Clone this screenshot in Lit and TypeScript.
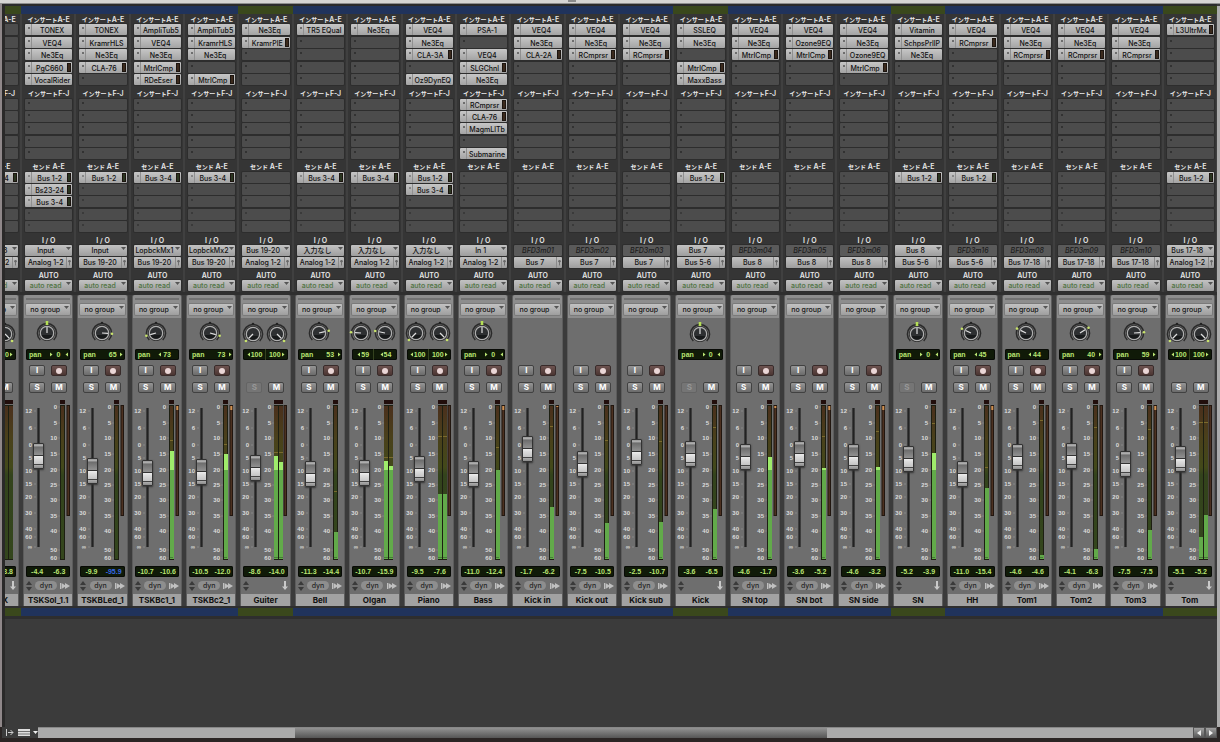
import { LitElement, html, svg, css, nothing } from "lit";
import { classMap } from "lit/directives/class-map.js";

interface Slot { name: string; meter?: boolean; }
interface Track {
  name: string;
  bus?: boolean;
  inserts: string[];
  insertsB?: string[];
  sends?: string[];
  input: string;
  offline?: boolean;
  output: string;
  pans: number[];
  record: boolean;
  solo: boolean;
  dyn: boolean;
  fader: number;
  levels: number[];
  peak?: number;
  reduction: number;
  volume: string;
  peakText: string;
  silent?: boolean;
}

/* A trailing "|" on a slot name marks a plug-in or send with a small meter. */
const parse = (list: string[] | undefined): Slot[] =>
  [0, 1, 2, 3, 4].map((i) => {
    const raw = list?.[i] ?? "";
    return { name: raw.replace("|", ""), meter: raw.endsWith("|") };
  });

/* fader, levels and peak are distances from the top of the fader area; reduction -1 means no reduction meter */
const t = (
  name: string, inserts: string[], sends: string[], input: string, output: string, pans: number[],
  fader: number, levels: number[], peak: number, reduction: number, volume: string, peakText: string,
  extra: Partial<Track> = {},
): Track => ({
  name, inserts, sends, input, output, pans, fader, levels, peak, reduction, volume, peakText,
  record: true, solo: true, dyn: true, ...extra,
});

const busTrack: Partial<Track> = { bus: true, record: false, solo: false, dyn: false };
const off: Partial<Track> = { offline: true };

const edgeTrack = t("TONEX", [], ["Bus 3-4|"], "Bus 17-18", "Analog 1-2", [-100, 100], 75, [165, 165], 0, -1, "-8.0", "-13.8",
  { ...busTrack, solo: true });

const tracks: Track[] = [
  t("TSKSol_1.1", ["TONEX", "VEQ4", "Ne3Eq", "PgC660|", "VocalRider"], ["Bus 1-2|", "Bs23-24|", "Bus 3-4|"], "Input", "Analog 1-2", [0], 61, [165], 0, 0, "-4.4", "-6.3"),
  t("TSKBLed_1", ["TONEX", "KramrHLS", "Ne3Eq", "CLA-76|"], ["Bus 1-2|"], "Input", "Bus 19-20", [65], 76, [165], 0, 0, "-9.9", "-95.9", { silent: true }),
  t("TSKBc1_1", ["AmpliTub5", "VEQ4", "Ne3Eq", "MtrlCmp|", "RDeEser|"], ["Bus 3-4|"], "LopbckMx1", "Bus 19-20", [-73], 78, [56], 45, 4, "-10.7", "-10.6"),
  t("TSKBc2_1", ["AmpliTub5", "KramrHLS", "Ne3Eq", "", "MtrlCmp|"], ["Bus 3-4|"], "LopbckMx2", "Bus 19-20", [73], 77, [59], 49, 4, "-10.5", "-12.0"),
  t("Guiter", ["Ne3Eq", "KramrPlE|"], [], "Bus 19-20", "Analog 1-2", [-100, 100], 73, [61, 67], 57, 0, "-8.6", "-14.0", busTrack),
  t("Bell", ["TR5 EQual"], ["Bus 3-4|"], "入力なし", "Analog 1-2", [53], 79, [137], 96, -1, "-11.3", "-14.4"),
  t("Olgan", ["Ne3Eq"], ["Bus 3-4|"], "入力なし", "Analog 1-2", [-59, -54], 78, [66, 71], 62, -1, "-10.7", "-15.9"),
  t("Piano", ["VEQ4", "Ne3Eq", "CLA-3A|", "", "Oz9DynEQ"], ["Bus 1-2|", "Bus 3-4|"], "入力なし", "Analog 1-2", [-100, 100], 74, [99, 99], 41, 0, "-9.5", "-7.6"),
  t("Bass", ["PSA-1", "", "VEQ4", "SLGChnl|", "Ne3Eq"], [], "In 1", "Analog 1-2", [0], 79, [75], 52, 4, "-11.0", "-12.4", { insertsB: ["RCmprsr|", "CLA-76|", "MagmLlTb", "", "Submarine"] }),
  t("Kick in", ["VEQ4", "Ne3Eq", "CLA-2A|"], [], "BFD3m01", "Bus 7", [], 54, [112], 31, 1, "-1.7", "-6.2", off),
  t("Kick out", ["VEQ4", "Ne3Eq", "RCmprsr|"], [], "BFD3m02", "Bus 7", [], 69, [128], 45, 0, "-7.5", "-10.5", off),
  t("Kick sub", ["VEQ4", "Ne3Eq", "RCmprsr|"], [], "BFD3m03", "Bus 7", [], 57, [127], 46, 0, "-2.5", "-10.7", off),
  t("Kick", ["SSLEQ", "Ne3Eq", "", "MtrlCmp|", "MaxxBass"], ["Bus 1-2|"], "Bus 7", "Bus 5-6", [0], 59, [114], 32, 0, "-3.6", "-6.5", busTrack),
  t("SN top", ["VEQ4", "Ne3Eq", "MtrlCmp|"], [], "BFD3m04", "Bus 8", [], 62, [62], 0, 2, "-4.6", "-1.7", off),
  t("SN bot", ["VEQ4", "Ozone9EQ", "MtrlCmp|"], [], "BFD3m05", "Bus 8", [], 59, [73], 41, 4, "-3.6", "-5.2", off),
  t("SN side", ["VEQ4", "Ne3Eq", "Ozone9EQ", "MtrlCmp|"], [], "BFD3m06", "Bus 8", [], 62, [72], 36, 4, "-4.6", "-3.2", off),
  t("SN", ["Vitamin", "SchpsPrllP", "Ne3Eq"], ["Bus 1-2|"], "Bus 8", "Bus 5-6", [0], 64, [58], 28, -1, "-5.2", "-3.9", busTrack),
  t("HH", ["VEQ4", "RCmprsr|"], ["Bus 1-2|"], "BFD3m16", "Bus 5-6", [-45], 79, [93], 72, 4, "-11.0", "-15.4", off),
  t("Tom1", ["VEQ4", "Ne3Eq", "RCmprsr|"], [], "BFD3m08", "Bus 17-18", [-44], 62, [160], 25, 0, "-4.6", "-4.6", off),
  t("Tom2", ["VEQ4", "Ne3Eq", "RCmprsr|"], [], "BFD3m09", "Bus 17-18", [40], 61, [154], 32, 0, "-4.1", "-6.3", off),
  t("Tom3", ["VEQ4", "Ne3Eq", "RCmprsr|"], [], "BFD3m10", "Bus 17-18", [59], 69, [135], 34, 4, "-7.5", "-7.5", off),
  t("Tom", ["L3UltrMx|"], ["Bus 1-2|"], "Bus 17-18", "Analog 1-2", [-100, 100], 64, [142, 120], 27, 0, "-5.1", "-5.2", { ...busTrack, solo: true }),
];

const faderScale: [string, number][] = [
  ["12", 16], ["6", 33], ["0", 50], ["5", 63], ["10", 76], ["15", 89], ["20", 102], ["30", 118], ["40", 134], ["60", 142], ["∞", 152],
];
const meterScale: [string, number][] = [
  ["0", 12], ["5", 28], ["10", 43], ["15", 59], ["20", 75], ["25", 90], ["30", 105], ["35", 121], ["40", 136], ["50", 155], ["60", 163],
];

class ChannelStrip extends LitElement {
  static properties = { track: { attribute: false } };
  declare track: Track;

  static styles = css`
    :host { display: block; min-width: 0; font-family: Inter, "Noto Sans CJK JP", sans-serif; font-size: 7px; color: #111; }
    * { box-sizing: border-box; }
    button, select, input { font: inherit; margin: 0; padding: 0; border: 0; border-radius: 0; color: inherit; }
    .band { height: 8px; background: #20335c; }
    .band.bus { background: #3a481c; }
    .upper { height: 278px; background: #353535; border-left: 1px solid #404040; border-right: 1px solid #404040; padding: 0 2px 0 3px; }
    .racks { display: grid; grid-template-rows: repeat(3, 1fr); height: 219px; }
    .rack { display: grid; grid-template-rows: 10px repeat(5, 1fr); }
    .rack + .rack { grid-template-rows: 12px repeat(5, 1fr); }
    .title { text-align: center; white-space: pre; color: #e8e8e8; font-weight: 600; line-height: 12px; height: 12px; }
    .rack + .rack .title { line-height: 14px; }
    .kana { font-size: 6px; font-weight: 700; }
    .slot { display: flex; align-items: stretch; width: 100%; height: 11px; background: linear-gradient(#c6c6c6, #a4a4a4); border-radius: 1px; box-shadow: 0 0 0 1px #2d2d2d; font-weight: 500; line-height: 13px; }
    .slot.empty { background: #4c4c4c; }
    .dot { flex: none; width: 7px; border-right: 1px solid #909090; padding: 3px 0 0 3px; }
    .dot::before { content: ""; display: block; width: 2px; height: 2px; border-radius: 1px; background: #555; }
    .empty .dot { border-color: transparent; }
    .empty .dot::before { background: #2a2a2a; }
    .send .dot::before { background: #777; }
    .send .empty .dot::before { background: #343434; }
    .label { flex: 1; text-align: center; white-space: nowrap; min-width: 0; display: flex; justify-content: center; }
    .mini { flex: none; width: 4px; height: 9px; margin: 1px 1px 0 0; border: 1px solid #1c1510; background: #3b2a1d; }
    .send .mini { background: #2a3520; }
    .routing { display: grid; gap: 1px; grid-template-rows: 11px 11px 11px 10px 11px; }
    .routing .title { height: 11px; line-height: 15px; }
    .routing .auto { height: 10px; line-height: 14px; }
    .drop { display: flex; height: 11px; border-radius: 1px; background: linear-gradient(#c2c2c2, #9e9e9e); box-shadow: 0 0 0 1px #2d2d2d; font-weight: 500; }
    .drop select { appearance: none; flex: 1; min-width: 0; width: 0; height: 11px; line-height: 11px; background: none; text-align: center; text-align-last: center; text-overflow: clip; }
    .drop svg { flex: none; display: block; width: 6px; height: 11px; }
    .drop.pin svg { border-left: 1px solid #8a8a8a; }
    .drop.green select { color: #4f7442; }
    .drop.offline { background: #5a5a5a; font-style: italic; }
    .drop.offline select { color: #1c1c1c; opacity: 1; }
    .gap { height: 3px; background: #2f2f2f; }
    .body { margin: 0 2px; background: #6e6e6e; border-radius: 2px 2px 0 0; height: 311px; display: flex; flex-direction: column; border-left: 1px solid #5c5c5c; border-right: 1px solid #5c5c5c; }
    .group { height: 23px; background: #8d8d8d; padding: 3px 2px 0; border-radius: 2px 2px 0 0; }
    .group::before { content: ""; display: block; height: 2px; margin-bottom: 4px; background: #727272; }
    .group .drop { box-shadow: 0 0 0 1px #7a7a7a; }
    .knobs { display: flex; justify-content: center; height: 32px; align-items: center; padding-right: 2px; }
    .knob { position: relative; flex: none; width: 24px; height: 24px; }
    .knob svg { display: block; width: 24px; height: 24px; }
    .knob input { position: absolute; inset: 0; width: 24px; height: 24px; opacity: 0; }
    .lcd { height: 11px; margin: 0 2px; display: flex; align-items: center; border-radius: 2px; background: #101a08; box-shadow: inset 0 0 0 1px #080a06; color: #b9e472; font-family: "Liberation Sans", sans-serif; font-weight: 700; font-size: 7px; line-height: 11px; }
    .lcd.blank { visibility: hidden; }
    .pan-name { flex: 1; padding-left: 3px; }
    .mark { width: 4px; height: 11px; flex: none; display: block; }
    .value { min-width: 10px; text-align: center; }
    .pan-end { width: 7px; display: flex; justify-content: center; }
    .half { flex: 1; display: flex; justify-content: center; align-items: center; }
    .half + .half { box-shadow: -1px 0 0 #34421f; }
    .pair { display: flex; gap: 6px; padding-left: 5px; height: 11px; }
    .first { margin: 5px 0 6px; }
    .key { width: 16px; height: 11px; border-radius: 2px; border: 1px solid #414141; background: linear-gradient(#959595, #6b6b6b); color: #fff; font-weight: 700; font-size: 8px; line-height: 9px; text-align: center; flex: none; }
    .key.rec { background: linear-gradient(#6d5350, #4b3532); border-color: #382b2a; display: flex; align-items: center; justify-content: center; }
    .key.rec::before { content: ""; width: 6px; height: 6px; border-radius: 3px; background: #ead6d6; }
    .key:disabled { background: #757575; color: #989898; border-color: #646464; }
    .faders { display: flex; height: 165px; margin-top: 2px; }
    .scale { flex: none; width: 9px; height: 165px; overflow: visible; }
    .scale text, .meters text { font-family: "Liberation Sans", sans-serif; font-size: 6px; font-weight: 700; fill: #dcdcdc; text-anchor: end; }
    .fader { appearance: none; flex: none; writing-mode: vertical-lr; direction: rtl; width: 11px; height: 165px; position: relative; background: linear-gradient(90deg, #4a4a4a, #222, #4a4a4a) center / 3px 139px no-repeat; }
    .fader::-webkit-slider-runnable-track { width: 11px; height: 165px; background: none; }
    .fader::-webkit-slider-thumb { appearance: none; width: 11px; height: 26px; border-radius: 1px; border: 1px solid #333; background: linear-gradient(#9a9a9a 0, #b2b2b2 8%, #6c6c6c 12%, #8f8f8f 44%, #333 45%, #333 49%, #eee 50%, #ddd 60%, #c4c4c4 84%, #444 85%, #444 88%, #ababab 89%, #8b8b8b 100%); box-shadow: 0 1px 2px #333; }
    .meters { flex: none; width: 29px; height: 165px; overflow: visible; }
    .levels { margin-top: 6px; justify-content: space-around; }
    .levels span { width: 20px; text-align: center; }
    .levels .silent { color: #3568e6; }
    .tools { display: flex; align-items: center; justify-content: space-between; height: 11px; margin-top: 3px; padding: 0 2px; }
    .tools svg { display: block; flex: none; }
    .dyn { width: 22px; height: 9px; border-radius: 5px; background: #8e8e8e; color: #262626; line-height: 9px; font-weight: 500; }
    .name { height: 12px; margin-top: 3px; background: #a2a2a2; font-size: 8px; font-weight: 700; line-height: 12px; display: flex; justify-content: center; white-space: nowrap; }
    .foot { border-top: 2px solid #2f2f2f; height: 10px; }
  `;

  private rack(prefix: string, range: string, list: string[] | undefined, send = false) {
    return html`<section class=${classMap({ rack: true, send })}>
      <div class="title"><span class="kana">${prefix}</span>${send ? " " : ""}${range}</div>
      ${parse(list).map((s, i) => html`<button class=${classMap({ slot: true, empty: !s.name })} aria-label=${s.name || `${prefix} ${i + 1}`}>
        <span class="dot"></span><span class="label">${s.name}</span>${s.meter ? html`<span class="mini"></span>` : nothing}
      </button>`)}
    </section>`;
  }

  private drop(label: string, value: string, kind = "") {
    return html`<div class="drop ${kind}">
      <select aria-label=${label} ?disabled=${kind === "offline"}><option>${value}</option></select>
      ${kind === "pin"
        ? html`<svg viewBox="0 0 6 11"><circle cx="3" cy="4" r="1.5" fill="#777"></circle><path d="M3 2.5V9M1.5 4H4.5" stroke="#666" fill="none"></path></svg>`
        : kind === "offline" ? nothing
        : html`<svg viewBox="0 0 6 11"><path d="M0 2H5L2.5 5Z" fill="#555"></path></svg>`}
    </div>`;
  }

  private knob(pan: number) {
    const a = (Math.sign(pan) * Math.min(135, Math.abs(pan) * 1.45) * Math.PI) / 180;
    const x = (r: number) => 12 + r * Math.sin(a);
    const y = (r: number) => 12 - r * Math.cos(a);
    return html`<label class="knob">
      <svg viewBox="0 0 24 24">
        <path d="M5.3 19A9.6 9.6 0 1 1 18.7 19" fill="none" stroke="#2a2a2a" stroke-width="1.5"></path>
        <circle cx="12" cy="2" r="1.3" fill="#222"></circle>
        <circle cx="12" cy="12" r="8" fill="#252525"></circle>
        <circle cx="12" cy="12" r="6.7" fill="#2e3032" stroke="#b0b0b0" stroke-width="1.2"></circle>
        <path d="M6.5 14A6 6 0 0 0 17.5 14Z" fill="#17191a"></path>
        <path d="M${x(0)} ${y(0)}L${x(6)} ${y(6)}" stroke="#e0e0e0" stroke-width="1.2"></path>
        ${pan === 0
          ? svg`<rect x="10.7" y="0" width="2.6" height="4" fill="#b5df55"></rect>`
          : svg`<circle cx=${x(10)} cy=${y(10)} r="1.3" fill="#c8e36c"></circle>`}
      </svg>
      <input type="range" min="-100" max="100" aria-label="pan" .value=${String(pan)}>
    </label>`;
  }

  private mark(right: boolean) {
    return html`<svg class="mark" viewBox="0 0 4 11"><path d=${right ? "M1 3.5V7.5L3.5 5.5Z" : "M3 3.5V7.5L.5 5.5Z"} fill="#b9e472"></path></svg>`;
  }

  private panReadout(pans: number[]) {
    if (!pans.length) return html`<div class="lcd blank"></div>`;
    if (pans.length === 1) {
      const p = pans[0];
      return html`<div class="lcd"><span class="pan-name">pan</span>${p <= 0 ? this.mark(p === 0) : nothing}
        <span class="value">${Math.abs(p)}</span><span class="pan-end">${p >= 0 ? this.mark(p > 0) : nothing}</span></div>`;
    }
    return html`<div class="lcd">${pans.map((p) => html`<span class="half">${p < 0 ? this.mark(false) : nothing}<span>${Math.abs(p)}</span>${p > 0 ? this.mark(true) : nothing}</span>`)}</div>`;
  }

  private meters(tr: Track) {
    const stereo = tr.levels.length > 1;
    const gr = tr.reduction >= 0;
    const shift = gr ? 0 : 1;
    const left = (stereo ? 13 : 16) + shift;
    const width = stereo ? 9 : 5;
    const bar = stereo ? 4 : 3;
    return html`<svg class="meters" viewBox="0 0 29 165">
      <defs><linearGradient id="g" x1="0" y1="0" x2="0" y2="1">
        <stop offset="0" stop-color="#4a2f1c"></stop><stop offset=".2" stop-color="#4a401b"></stop>
        <stop offset=".4" stop-color="#43491a"></stop><stop offset=".45" stop-color="#33431c"></stop><stop offset="1" stop-color="#34461d"></stop>
      </linearGradient></defs>
      ${meterScale.map(([s, y]) => svg`<text x=${left - 3} y=${y + 2}>${s}</text><path d="M${left - 2} ${y}h2" stroke="#8d8d8d" stroke-width=".6"></path>`)}
      <rect x=${left} y="5" width=${width} height="4" fill="#210e0c"></rect>
      <rect x=${left} y="10" width=${width} height="155" fill="#1d1f12"></rect>
      ${tr.levels.map((y, i) => {
        const x = left + (stereo ? i * 5 : 1);
        return svg`<rect x=${x} y="11" width=${bar} height="153" fill="url(#g)"></rect>
          ${tr.peak ? svg`<rect x=${x} y=${tr.peak} width=${bar} height="1" fill="#7a6a2c"></rect>` : nothing}
          ${y < 165 ? svg`<rect x=${x} y=${y} width=${stereo ? bar : 4} height=${164 - y} fill="#62aa4a"></rect>
            <rect x=${x} y="162" width=${bar} height="1" fill="#467c35"></rect>` : nothing}
          ${y < 75 ? svg`<rect x=${x} y=${y} width=${stereo ? bar : 4} height=${75 - y} fill="#9fec6b"></rect>` : nothing}`;
      })}
      ${gr ? svg`<rect x="22.5" y="10" width="3.5" height="111" fill="#21160f"></rect>
        <rect x="23.5" y="11" width="1.5" height="109" fill="#4c3121"></rect>
        ${tr.reduction ? svg`<rect x="23.3" y="11" width="2" height=${tr.reduction} fill="#cf9152"></rect>` : nothing}` : nothing}
    </svg>`;
  }

  render() {
    const tr = this.track;
    const band = classMap({ band: true, bus: !!tr.bus });
    return html`
      <div class=${band}></div>
      <div class="upper">
        <div class="racks">
          ${this.rack("インサート", "A-E", tr.inserts)}
          ${this.rack("インサート", "F-J", tr.insertsB)}
          ${this.rack("センド", "A-E", tr.sends, true)}
        </div>
        <section class="routing">
          <div class="title">I / O</div>
          ${this.drop("input", tr.input, tr.offline ? "offline" : "")}
          ${this.drop("output", tr.output, "pin")}
          <div class="title auto">AUTO</div>
          ${this.drop("automation", "auto read", "green")}
        </section>
      </div>
      <div class="gap"></div>
      <div class="body">
        <div class="group">${this.drop("group", "no group")}</div>
        <div class="knobs">${tr.pans.map((p) => this.knob(p))}</div>
        ${this.panReadout(tr.pans)}
        <div class="pair first">${tr.record ? html`<button class="key">I</button><button class="key rec" aria-label="record"></button>` : nothing}</div>
        <div class="pair"><button class="key" ?disabled=${!tr.solo}>S</button><button class="key">M</button></div>
        <div class="faders">
          <svg class="scale" viewBox="0 0 9 165">
            ${faderScale.map(([s, y]) => svg`<text x="8" y=${y + 2}>${s}</text><path d="M10 ${y}h2" stroke="#999" stroke-width=".6"></path>`)}
          </svg>
          <input class="fader" type="range" min="0" max="139" aria-label="volume" .value=${String(152 - tr.fader)}>
          ${this.meters(tr)}
        </div>
        <div class="lcd levels"><span>${tr.volume}</span><span class=${tr.silent ? "silent" : ""}>${tr.peakText}</span></div>
        <div class="tools">
          <svg width="6" height="10" viewBox="0 0 6 10"><path d="M0 4L3 0L6 4ZM0 6L3 10L6 6Z" fill="#3a3a3a"></path></svg>
          ${tr.dyn
            ? html`<button class="dyn">dyn</button><svg width="10" height="8" viewBox="0 0 10 8"><path d="M0 1H1V7H0ZM1.500 1L5 3.300V1L10 4L5 7V4.700L1.500 7Z" fill="#c0c0c0"></path></svg>`
            : html`<svg width="6" height="9" viewBox="0 0 6 9"><path d="M2 0H4V5.5H6L3 9L0 5.5H2Z" fill="#c9c9c9"></path></svg>`}
        </div>
        <div class="name">${tr.name}</div>
      </div>
      <div class="foot"><div class=${band}></div></div>
    `;
  }
}
customElements.define("channel-strip", ChannelStrip);

class AppRoot extends LitElement {
  static styles = css`
    :host { display: flex; flex-direction: column; min-height: 100vh; background: #3b3b3b; font-family: Inter, sans-serif; }
    * { box-sizing: border-box; }
    .top { height: 4px; background: #d6d5d3; border-bottom: 1px solid #8e8e8e; display: flex; justify-content: center; }
    .grip { width: 8px; height: 2px; margin-right: 76px; background: #8b8b8b; }
    .window { flex: 1; display: flex; border-left: 2px solid #8f8789; }
    .edge { width: 3px; background: #2a2929; }
    .main { flex: 1; min-width: 0; display: flex; flex-direction: column; }
    .mixer { display: flex; border-top: 2px solid #2b2b2b; border-bottom: 3px solid #2e2e2e; }
    .partial { flex: none; width: 16px; overflow: hidden; display: flex; justify-content: flex-end; }
    .partial channel-strip { flex: none; width: 54px; }
    .strips { flex: 1; min-width: 0; display: grid; grid-template-columns: repeat(22, 1fr); }
    .side { width: 3px; margin-top: 2px; background: #acacac; }
    .bar { display: flex; align-items: stretch; height: 15px; padding: 0 3px 4px 2px; background: #2b2524; }
    .icons { flex: none; width: 36px; background: #3b3b3b; display: flex; align-items: center; gap: 4px; padding-left: 4px; }
    .icons button { padding: 0; border: 0; background: none; display: flex; }
    .track { flex: 1; display: grid; grid-template-columns: 257fr 533fr 366fr; background: #aaa; border-top: 1px solid #888; }
    .thumb { grid-column: 2; background: linear-gradient(#929292, #555); }
    .step { width: 12px; padding: 0; border: 1px solid #555; background: linear-gradient(#a0a0a0, #5b5b5b); display: flex; align-items: center; justify-content: center; }
  `;

  render() {
    return html`
      <div class="top"><span class="grip"></span></div>
      <div class="window">
        <div class="edge"></div>
        <main class="main">
          <div class="mixer">
            <div class="partial"><channel-strip .track=${edgeTrack}></channel-strip></div>
            <div class="strips">${tracks.map((track) => html`<channel-strip .track=${track}></channel-strip>`)}</div>
          </div>
        </main>
        <div class="side"></div>
      </div>
      <div class="bar">
        <div class="icons">
          <button aria-label="show track list"><svg width="8" height="7" viewBox="0 0 8 7"><path d="M.5 0V7M2 3.5H7M4.5 1L7 3.5L4.5 6" fill="none" stroke="#ccc"></path></svg></button>
          <button aria-label="view options"><svg width="20" height="7" viewBox="0 0 20 7"><path d="M0 0H12V7H0Z" fill="#ddd"></path><path d="M0 2.5H12M0 5H12" stroke="#555" stroke-width=".8"></path><path d="M15 2H20L17.500 5Z" fill="#eee"></path></svg></button>
        </div>
        <div class="track"><div class="thumb"></div></div>
        <button class="step" aria-label="scroll left"><svg width="4" height="6" viewBox="0 0 4 6"><path d="M4 0V6L0 3Z" fill="#eee"></path></svg></button>
        <button class="step" aria-label="scroll right"><svg width="4" height="6" viewBox="0 0 4 6"><path d="M0 0V6L4 3Z" fill="#eee"></path></svg></button>
      </div>
    `;
  }
}
customElements.define("app-root", AppRoot);
